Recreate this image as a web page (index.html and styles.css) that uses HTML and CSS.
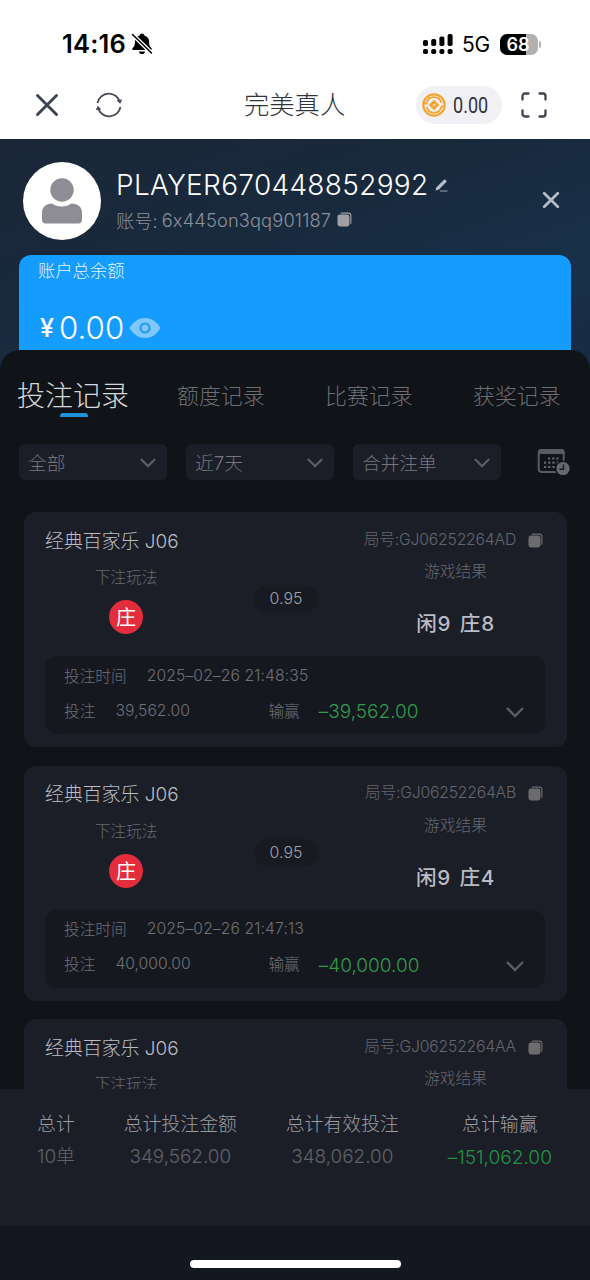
FILE: index.html
```html
<!DOCTYPE html>
<html lang="zh-CN">
<head>
<meta charset="utf-8">
<title>完美真人</title>
<link rel="stylesheet" href="styles.css">
</head>
<body>
<svg class="defs" width="0" height="0">
  <symbol id="copy" viewBox="0 0 16 16"><path d="M4.500 1.200h7.700a2.600 2.600 0 0 1 2.600 2.600V12" fill="none" stroke="currentColor" stroke-width="1.200" stroke-linecap="round"/><rect x="0.500" y="2.600" width="12.800" height="12.800" rx="2.600" fill="currentColor"/></symbol>
  <symbol id="chev" viewBox="0 0 20 12"><path d="M2 2l8 8 8-8" fill="none" stroke="currentColor" stroke-width="2.400"/></symbol>
</svg>
<div class="phone">
  <header class="status">
    <span class="time">14:16</span>
    <svg class="bell" width="22" height="24" viewBox="0 0 22 24"><path d="M11 1.500c1.300 0 2.100.8 2.300 1.900 3.300.9 4.800 3.200 4.800 6 0 4.300 1 5.200 2.300 6.700.8 1 .4 2-.8 2H2.400c-1.200 0-1.600-1-.8-2 1.300-1.500 2.300-2.400 2.300-6.700 0-2.800 1.500-5.100 4.800-6C8.900 2.300 9.700 1.500 11 1.500z"/><path d="M7.800 19.500h6.400c-.4 1.700-1.600 2.600-3.200 2.600s-2.800-.9-3.200-2.600z"/><path d="M1.500 2.500l19 18.500" stroke="#fff" stroke-width="4"/><path d="M1.500 2.500l19 18.500" stroke="#000" stroke-width="1.500" stroke-linecap="round"/></svg>
    <svg class="signal" width="30" height="20" viewBox="0 0 30 20"><rect x="0" y="6" width="5" height="6" rx="1.800"/><rect x="8.200" y="5" width="5" height="7" rx="1.800"/><rect x="16.400" y="2.500" width="5" height="9.500" rx="1.800"/><rect x="24.600" y="0" width="5" height="12" rx="1.800"/><rect x="0" y="15" width="5" height="5" rx="1.800"/><rect x="8.200" y="15" width="5" height="5" rx="1.800"/><rect x="16.400" y="15" width="5" height="5" rx="1.800"/><rect x="24.600" y="15" width="5" height="5" rx="1.800"/></svg>
    <span class="net">5G</span>
    <span class="battery">68</span><span class="nub"></span>
  </header>
  <nav class="nav">
    <svg class="close" width="24" height="24" viewBox="0 0 24 24"><path d="M2.500 2.500l19 19M21.500 2.500l-19 19" stroke="#3f4554" stroke-width="3" stroke-linecap="round"/></svg>
    <svg class="refresh" width="28" height="26" viewBox="0 0 28 26" fill="none" stroke="#444855" stroke-width="1.800"><path d="M2.500 11a11.500 11.500 0 0 1 22.500-.5M25.500 15a11.500 11.500 0 0 1-22.500.5"/><path d="M23 8.500l2 2.200 1.200-2.500zM1.800 17.300l1.200-2.500 2 2.200z" fill="#444855" stroke-width="1.200"/></svg>
    <h1 class="title">完美真人</h1>
    <div class="wallet">
      <svg width="24" height="24" viewBox="0 0 24 24" fill="none" stroke="#f5a52f"><circle cx="12" cy="12" r="10.700" stroke-width="2.200"/><path d="M4.700 10a7.500 7.500 0 0 1 14.600 0M19.300 14a7.500 7.500 0 0 1-14.600 0" stroke-width="1.800"/><path d="M1 10.500h4.200M18.800 13.500H23" stroke-width="1.800"/><path d="M12 8.800l3.200 3.200-3.200 3.200L8.800 12z" stroke-width="3"/></svg>
      <span>0.00</span>
    </div>
    <svg class="scan" width="26" height="26" viewBox="0 0 26 26" fill="none" stroke="#3f4450" stroke-width="2.300" stroke-linecap="round"><path d="M1.500 7.500V4a2.500 2.500 0 0 1 2.500-2.500h3.500M18.500 1.500H22A2.500 2.500 0 0 1 24.500 4v3.500M24.500 18.500V22a2.500 2.500 0 0 1-2.500 2.500h-3.500M7.500 24.500H4A2.500 2.500 0 0 1 1.500 22v-3.500"/></svg>
  </nav>
  <section class="profile">
    <div class="user">
      <svg class="avatar" width="78" height="78" viewBox="0 0 78 78"><circle cx="39" cy="39" r="39" fill="#fff"/><circle cx="39" cy="28" r="11.700" fill="#8e8c94"/><path d="M19 58V51c0-6 4-9.500 10-9.500 2.500 2 5.500 2.900 9.500 2.900s7.500-.9 10-2.900C55 41.500 59 45 59 51v7c0 2-1.500 3.500-3.500 3.500h-33C20.500 61.500 19 60 19 58z" fill="#8e8c94"/></svg>
      <div class="who">
        <div class="name"><span>PLAYER670448852992</span><svg width="13" height="13" viewBox="0 0 13 13"><path d="M.5 11.500l.8-3L9 .8q.8-.5 1.400 0l.9.900q.5.700 0 1.300L4 10.500z" fill="#b9bfcb"/><path d="M5 12h7.500" stroke="#9aa2b0" stroke-width="1"/></svg></div>
        <div class="acct"><span>账号:</span><span class="id">6x445on3qq901187</span><svg class="copy"><use href="#copy"/></svg></div>
      </div>
      <svg class="dismiss" width="18" height="18" viewBox="0 0 18 18"><path d="M2.200 2.200l13.600 13.600M15.800 2.200L2.200 15.800" stroke="#b4bac6" stroke-width="2.800" stroke-linecap="round"/></svg>
    </div>
    <div class="balance">
      <div class="balance-label">账户总余额</div>
      <div class="balance-row"><span class="yen">¥</span><span class="amount">0.00</span><svg width="32" height="22" viewBox="0 0 32 22"><path d="M.5 11C5 4 10 1 16 1s11 3 15.500 10C27 18 22 21 16 21S5 18 .5 11z" fill="#80c7fb"/><circle cx="16" cy="11" r="4.500" fill="none" stroke="#239bea" stroke-width="2.200"/></svg></div>
    </div>
  </section>
  <main class="panel">
    <div class="tabs"><span class="tab active">投注记录</span><span class="tab">额度记录</span><span class="tab">比赛记录</span><span class="tab">获奖记录</span></div>
    <div class="filters">
      <div class="select"><span>全部</span><svg class="chev"><use href="#chev"/></svg></div>
      <div class="select"><span>近7天</span><svg class="chev"><use href="#chev"/></svg></div>
      <div class="select"><span>合并注单</span><svg class="chev"><use href="#chev"/></svg></div>
      <svg class="calendar" width="34" height="28" viewBox="0 0 34 28"><rect x="1.700" y="2" width="25" height="22" rx="3" fill="none" stroke="#5a5b60" stroke-width="2"/><path d="M1 6V4a3 3 0 0 1 3-3h20.500a3 3 0 0 1 3 3v2z" fill="#5a5b60"/><path d="M11 10.500h12.500M7 14.700h16.500M7 19h12" stroke="#66676c" stroke-width="2.200" stroke-dasharray="2.200 2"/><circle cx="26" cy="20.500" r="8" fill="#101318"/><circle cx="26" cy="20.500" r="6.600" fill="#68696e"/><path d="M26.500 16.500v4.700H22.500" fill="none" stroke="#15181e" stroke-width="1.400"/></svg>
    </div>
    <div class="list">
      <article class="card">
        <div class="card-head"><span class="game">经典百家乐 J06</span><span class="round">局号:GJ06252264AD</span><svg class="copy"><use href="#copy"/></svg></div>
        <div class="card-body">
          <div class="play"><span class="label">下注玩法</span><span class="badge">庄</span></div>
          <div class="odds"><span>0.95</span></div>
          <div class="result"><span class="label">游戏结果</span><strong>闲9 庄8</strong></div>
        </div>
        <div class="detail">
          <div class="row"><span class="k">投注时间</span><span class="date">2025–02–26 21:48:35</span></div>
          <div class="row"><span class="k">投注</span><span class="stake">39,562.00</span><span class="k">输赢</span><span class="loss">–39,562.00</span><svg class="chev"><use href="#chev"/></svg></div>
        </div>
      </article>
      <article class="card">
        <div class="card-head"><span class="game">经典百家乐 J06</span><span class="round">局号:GJ06252264AB</span><svg class="copy"><use href="#copy"/></svg></div>
        <div class="card-body">
          <div class="play"><span class="label">下注玩法</span><span class="badge">庄</span></div>
          <div class="odds"><span>0.95</span></div>
          <div class="result"><span class="label">游戏结果</span><strong>闲9 庄4</strong></div>
        </div>
        <div class="detail">
          <div class="row"><span class="k">投注时间</span><span class="date">2025–02–26 21:47:13</span></div>
          <div class="row"><span class="k">投注</span><span class="stake">40,000.00</span><span class="k">输赢</span><span class="loss">–40,000.00</span><svg class="chev"><use href="#chev"/></svg></div>
        </div>
      </article>
      <article class="card">
        <div class="card-head"><span class="game">经典百家乐 J06</span><span class="round">局号:GJ06252264AA</span><svg class="copy"><use href="#copy"/></svg></div>
        <div class="card-body">
          <div class="play"><span class="label">下注玩法</span></div>
          <div class="odds"></div>
          <div class="result"><span class="label">游戏结果</span></div>
        </div>
      </article>
    </div>
  </main>
  <footer class="totals">
    <div><span class="h">总计</span><span class="v">10单</span></div>
    <div><span class="h">总计投注金额</span><span class="v">349,562.00</span></div>
    <div><span class="h">总计有效投注</span><span class="v">348,062.00</span></div>
    <div><span class="h">总计输赢</span><span class="v green">–151,062.00</span></div>
  </footer>
  <div class="home"><span></span></div>
</div>
</body>
</html>
```
FILE: styles.css
```css
* { box-sizing: border-box; }
body { margin: 0; background: #141720; font-family: Inter, "Noto Sans CJK SC", sans-serif; font-weight: 300; font-feature-settings: "calt" 0; }
svg { display: block; flex: none; }
.defs { position: absolute; }
.phone { width: 590px; height: 1280px; display: flex; flex-direction: column; overflow: hidden; white-space: nowrap; }

.status { height: 70px; flex: none; background: #fff; display: flex; align-items: center; padding: 18px 0 0 62px; color: #000; }
.time { width: 69px; font-size: 25.500px; font-weight: 600; letter-spacing: 0.200px; line-height: 30px; }
.signal { margin-left: 270px; }
.net { margin-left: 9px; width: 38px; font-size: 21px; font-weight: 400; letter-spacing: -0.300px; }
.battery { width: 38px; height: 21px; border-radius: 7px; background: linear-gradient(90deg, #000 68%, #b1b1b1 68%); color: #fff; font-size: 18px; font-weight: 600; line-height: 21px; text-align: center; padding-right: 2px; }
.nub { width: 2px; height: 7px; margin-left: 1px; border-radius: 0 2px 2px 0; background: #b1b1b1; }

.nav { height: 69px; flex: none; background: #fff; display: flex; align-items: center; padding-left: 35px; }
.refresh { margin-left: 36px; }
.title { margin: 0 0 0 121px; width: 172px; font-size: 25.300px; line-height: 36px; font-weight: 300; color: #30343d; }
.wallet { width: 86px; height: 38px; border-radius: 19px; background: #f0f0f5; display: flex; align-items: center; padding-left: 6px; gap: 7px; }
.wallet span { font-family: Roboto, sans-serif; font-weight: 400; font-size: 22px; color: #31343d; transform: scaleX(.82); transform-origin: left; padding-top: 1px; }
.scan { margin-left: 19px; }

.profile { height: 231px; flex: none; padding: 21px 19px 0; background: linear-gradient(160deg, #1a2636 0%, #182a3e 45%, #183149 75%, #172a42 100%); }
.user { height: 95px; display: flex; align-items: flex-start; padding-left: 4px; }
.avatar { margin-top: 2px; }
.who { margin-left: 15px; width: 426px; }
.name { display: flex; align-items: center; gap: 6px; height: 50px; font-size: 28px; letter-spacing: 0.320px; color: #fff; }
.acct { display: flex; align-items: center; height: 20px; font-size: 18.300px; color: #8b909b; padding-bottom: 1px; }
.acct .id { margin-left: 4px; letter-spacing: 0.130px; }
.acct .copy { margin-left: 6px; color: #a09fa4; }
.copy { width: 15px; height: 15px; }
.dismiss { margin-top: 31px; }
.balance { height: 115px; background: #159cff; border-radius: 12px 12px 0 0; padding: 5px 19px 0; color: #fff; }
.balance-label { font-size: 17.300px; line-height: 22px; color: #e6f4ff; }
.balance-row { display: flex; align-items: center; height: 38px; margin-top: 27px; }
.yen { width: 21px; padding-left: 2px; font-size: 25px; font-weight: 500; }
.amount { width: 70px; font-size: 31.300px; }

.panel { height: 739px; margin-top: -20px; flex: none; background: #101317; border-radius: 20px 20px 0 0; overflow: hidden; }
.tabs { display: flex; align-items: center; height: 94px; padding: 0 0 5px 17px; color: #6c6e72; font-size: 21.900px; }
.tab { width: 148px; flex: none; margin-top: -1px; }
.tab.active { width: 160px; font-size: 28px; color: #d6d7db; position: relative; }
.tab.active::after { content: ""; position: absolute; left: 43px; bottom: -3px; width: 28px; height: 4px; border-radius: 3px 3px 0 0; background: #1f93d8; }
.filters { display: flex; align-items: center; gap: 19px; padding-left: 19px; height: 36px; }
.select { width: 148px; height: 36px; border-radius: 6px; background: #1b1d27; display: flex; align-items: center; justify-content: space-between; padding: 0 10px 2px 9px; font-size: 18.700px; color: #76777c; }
.select .chev { margin-top: 2px; }
.chev { width: 18px; height: 11px; color: #5b5d66; }
.row .chev { width: 20px; height: 12px; margin-top: 4px; }
.calendar { margin-left: 17px; }
.list { display: flex; flex-direction: column; gap: 18.500px; padding: 32px 23px 0 24px; }
.card { height: 235px; flex: none; border-radius: 12px; background: #1b1e27; padding: 14px 22px 0 21px; }
.card-head { height: 28px; display: flex; align-items: center; padding-bottom: 2px; }
.game { flex: 1; font-size: 18.900px; color: #b9bcc3; }
.round { font-size: 15.700px; letter-spacing: -0.180px; color: #64666d; padding-bottom: 2px; }
.card-head .copy { margin: 2px 2px 0 12px; color: #6c6c6f; }
.card-body { height: 102px; display: grid; grid-template-columns: 162px 158px 181px; justify-items: center; }
.play, .result { display: flex; flex-direction: column; align-items: center; }
.play { padding-top: 13px; gap: 11px; }
.odds { padding-top: 31px; }
.odds span { display: block; width: 64px; height: 28px; border-radius: 14px; background: #171a21; color: #a0a2a8; font-size: 15.900px; line-height: 28px; text-align: center; }
.result { padding-top: 7px; gap: 26px; }
.label { font-size: 15.700px; line-height: 22px; color: #686a71; }
.badge { width: 34px; height: 34px; border-radius: 50%; background: #e42d3c; color: #fff; font-size: 20px; line-height: 36px; text-align: center; font-weight: 400; }
.result strong { font-size: 20.600px; line-height: 30px; letter-spacing: 0.700px; word-spacing: 2.500px; font-weight: 500; color: #babcc3; }
.detail { width: 500px; height: 78px; border-radius: 12px; background: #161820; padding: 8px 20px 0 19px; }
.row { height: 22px; display: flex; align-items: center; font-size: 15.700px; color: #6e7076; }
.row + .row { height: 28px; margin-top: 10px; }
.k { margin-right: 20px; }
.date { letter-spacing: 0.100px; }
.stake { width: 153px; }
.loss { font-size: 19px; font-weight: 300; color: #319a4c; flex: 1; padding-top: 3px; margin-left: -1px; }

.totals { height: 137px; flex: none; background: #1b1e26; display: flex; justify-content: space-between; padding: 21px 38px 0 37px; }
.totals div { display: flex; flex-direction: column; align-items: center; gap: 4px; }
.totals span { line-height: 29px; font-size: 18.900px; }
.totals .v { line-height: 28px; }
.h { color: #9a9ca2; }
.v { color: #606268; }
.totals .green { color: #209447; font-size: 19.100px; }
.home { flex: 1; background: #141720; display: flex; justify-content: center; padding-top: 34px; }
.home span { width: 211px; height: 8px; border-radius: 4px; background: #fff; }
```
